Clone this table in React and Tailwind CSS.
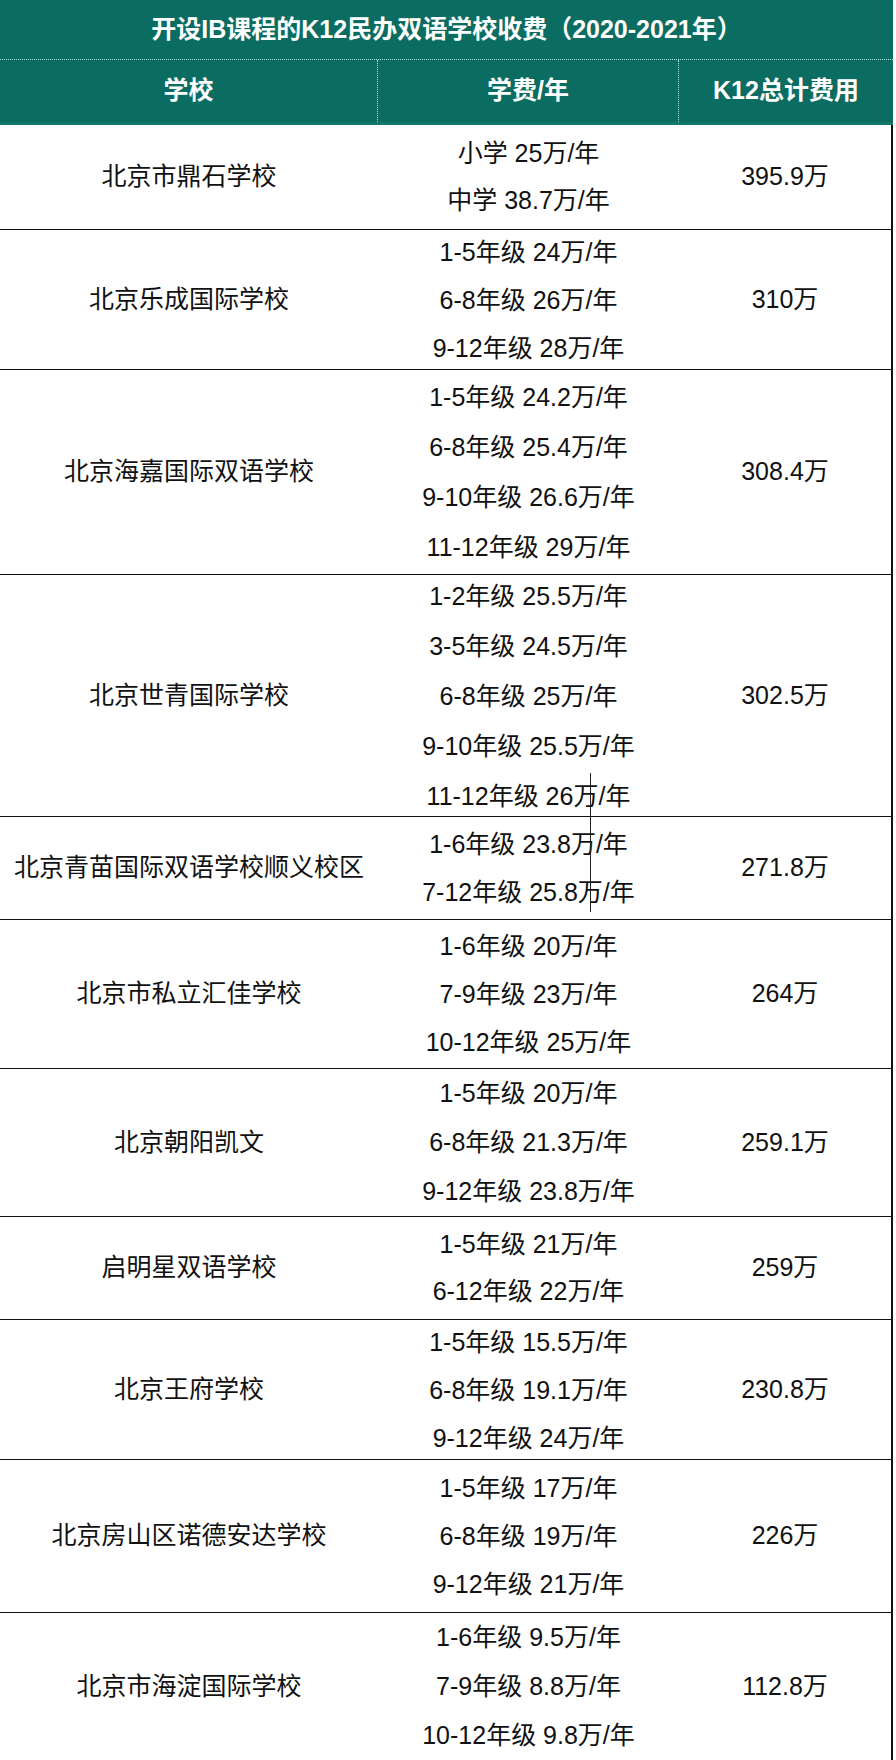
import React from 'react';

const ROWS = [
  { name: '北京市鼎石学校', fees: ['小学 25万/年', '中学 38.7万/年'], total: '395.9万', h: 'h-[105px]', lh: 'leading-[47px]' },
  { name: '北京乐成国际学校', fees: ['1-5年级 24万/年', '6-8年级 26万/年', '9-12年级 28万/年'], total: '310万', h: 'h-[140px]', lh: 'leading-[48px]' },
  { name: '北京海嘉国际双语学校', fees: ['1-5年级 24.2万/年', '6-8年级 25.4万/年', '9-10年级 26.6万/年', '11-12年级 29万/年'], total: '308.4万', h: 'h-[205px]', lh: 'leading-[50px]' },
  { name: '北京世青国际学校', fees: ['1-2年级 25.5万/年', '3-5年级 24.5万/年', '6-8年级 25万/年', '9-10年级 25.5万/年', '11-12年级 26万/年'], total: '302.5万', h: 'h-[242px]', lh: 'leading-[50px]' },
  { name: '北京青苗国际双语学校顺义校区', fees: ['1-6年级 23.8万/年', '7-12年级 25.8万/年'], total: '271.8万', h: 'h-[103px]', lh: 'leading-[48px]' },
  { name: '北京市私立汇佳学校', fees: ['1-6年级 20万/年', '7-9年级 23万/年', '10-12年级 25万/年'], total: '264万', h: 'h-[149px]', lh: 'leading-[48px]' },
  { name: '北京朝阳凯文', fees: ['1-5年级 20万/年', '6-8年级 21.3万/年', '9-12年级 23.8万/年'], total: '259.1万', h: 'h-[148px]', lh: 'leading-[49px]' },
  { name: '启明星双语学校', fees: ['1-5年级 21万/年', '6-12年级 22万/年'], total: '259万', h: 'h-[103px]', lh: 'leading-[47px]' },
  { name: '北京王府学校', fees: ['1-5年级 15.5万/年', '6-8年级 19.1万/年', '9-12年级 24万/年'], total: '230.8万', h: 'h-[140px]', lh: 'leading-[48px]' },
  { name: '北京房山区诺德安达学校', fees: ['1-5年级 17万/年', '6-8年级 19万/年', '9-12年级 21万/年'], total: '226万', h: 'h-[153px]', lh: 'leading-[48px]' },
  { name: '北京市海淀国际学校', fees: ['1-6年级 9.5万/年', '7-9年级 8.8万/年', '10-12年级 9.8万/年'], total: '112.8万', h: 'h-[147px]', lh: 'leading-[49px]' },
];

function Row({ row, last }) {
  return (
    <div className={`flex ${row.h} ${last ? '' : 'border-b border-[#111]'}`}>
      <div className="w-[378px] flex items-center justify-center">{row.name}</div>
      <div className="w-[301px] flex flex-col items-center justify-center">
        {row.fees.map((f) => (
          <div key={f} className={`${row.lh} whitespace-nowrap`}>{f}</div>
        ))}
      </div>
      <div className="flex-1 flex items-center justify-center">{row.total}</div>
    </div>
  );
}

export default function App() {
  return (
    <div
      className="w-[896px] h-[1760px] overflow-hidden bg-white"
      style={{ fontFamily: '"Liberation Sans", "Noto Sans CJK SC", sans-serif' }}
    >
      <div className="w-[893px] relative">
        <div className="bg-[#0b6c61] text-white font-bold text-[25px]">
          <div className="h-[60px] flex items-center justify-center border-b border-dotted border-[#a8e6dc]">
            开设IB课程的K12民办双语学校收费（2020-2021年）
          </div>
          <div className="h-[65px] flex border-b-[3px] border-[#12786c]">
            <div className="w-[378px] flex items-center justify-center border-r border-dotted border-[#a8e6dc]">学校</div>
            <div className="w-[301px] flex items-center justify-center border-r border-dotted border-[#a8e6dc]">学费/年</div>
            <div className="flex-1 flex items-center justify-center">K12总计费用</div>
          </div>
        </div>

        <div className="text-[25px] text-[#111] border-r-2 border-[#111]">
          {ROWS.map((row, i) => (
            <Row key={row.name} row={row} last={i === ROWS.length - 1} />
          ))}
        </div>

        {/* stray pen stroke in the scan */}
        <div className="absolute left-[590px] top-[773px] w-px h-[139px] bg-[#222]" />
      </div>
    </div>
  );
}
